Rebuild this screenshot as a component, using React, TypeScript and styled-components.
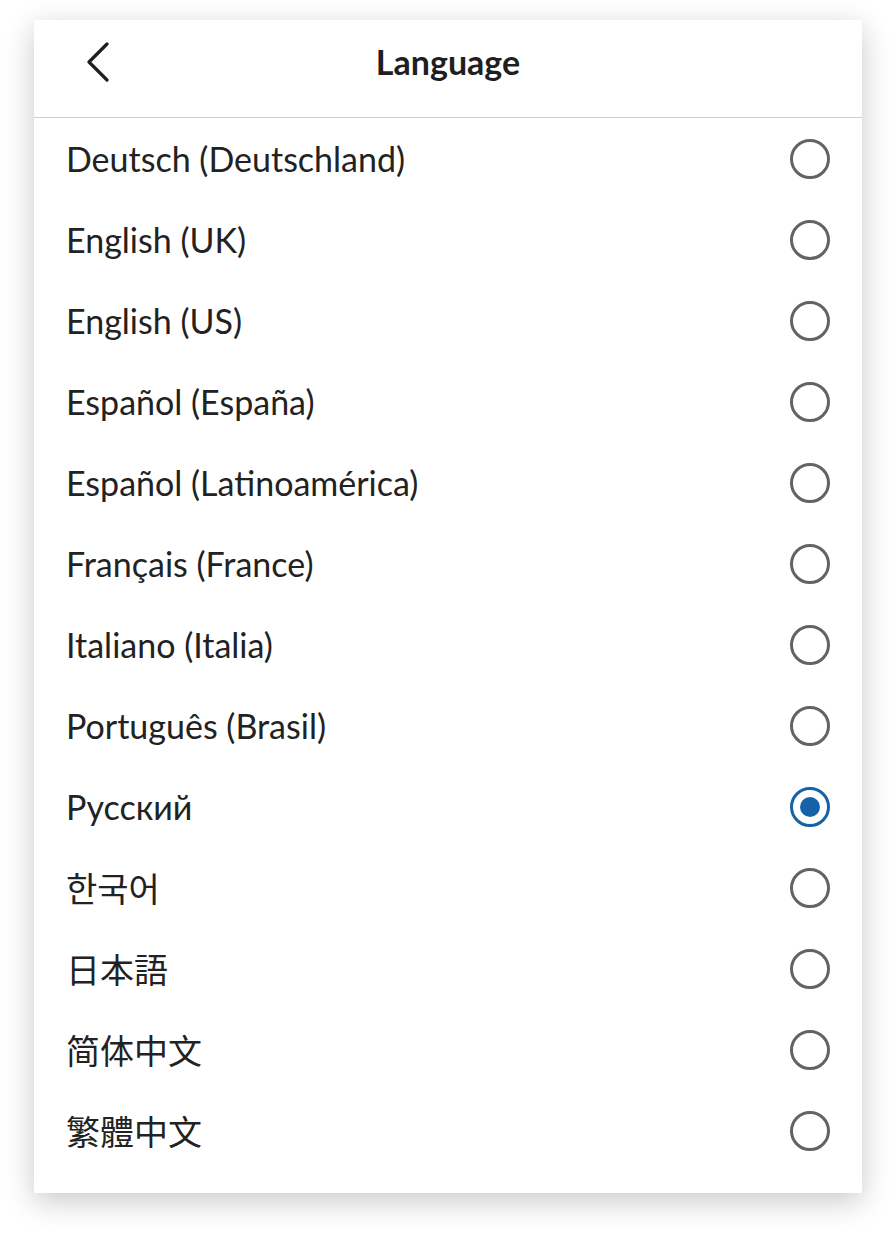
import React, { useState } from "react";
import styled, { createGlobalStyle } from "styled-components";

const Global = createGlobalStyle`
  html, body { margin: 0; padding: 0; background: #ffffff; }
  body { font-family: Lato, "Noto Sans CJK SC", sans-serif; }
`;

const Page = styled.div`
  padding: 20px 34px 48px 34px;
`;

const Card = styled.div`
  width: 828px;
  background: #ffffff;
  box-shadow: 0 8px 28px rgba(0, 0, 0, 0.22);
  padding-bottom: 22px;
`;

const Header = styled.div`
  height: 98px;
  box-sizing: border-box;
  padding-bottom: 14px;
  border-bottom: 1px solid #cfcfcf;
  display: grid;
  grid-template-columns: 97px 1fr 97px;
  align-items: center;
`;

const BackButton = styled.button`
  border: 0;
  background: transparent;
  padding: 0;
  margin-left: 52px;
  width: 30px;
  height: 44px;
  display: flex;
  align-items: center;
  justify-content: flex-start;
  cursor: pointer;
`;

const Title = styled.h1`
  margin: 0;
  text-align: center;
  font-family: Lato, sans-serif;
  font-weight: 700;
  font-size: 34px;
  color: #1f1f1f;
`;

const List = styled.div`
  display: flex;
  flex-direction: column;
`;

const Row = styled.label`
  height: 81px;
  display: flex;
  align-items: center;
  justify-content: space-between;
  padding: 0 32px 0 32px;
  cursor: pointer;
`;

const Name = styled.span<{ $lang?: string }>`
  font-family: ${(p) => (p.$lang ? cjkFont[p.$lang] : "Lato, sans-serif")};
  font-weight: 400;
  font-size: 34px;
  color: #222222;
`;

const Radio = styled.span<{ $checked: boolean }>`
  width: 40px;
  height: 40px;
  box-sizing: border-box;
  border-radius: 50%;
  border: 3px solid ${(p) => (p.$checked ? "#1562a8" : "#636363")};
  display: flex;
  align-items: center;
  justify-content: center;
  &::after {
    content: "";
    width: 20px;
    height: 20px;
    border-radius: 50%;
    background: #1562a8;
    display: ${(p) => (p.$checked ? "block" : "none")};
  }
`;

const cjkFont: Record<string, string> = {
  ko: '"Noto Sans CJK KR", sans-serif',
  ja: '"Noto Sans CJK JP", sans-serif',
  "zh-CN": '"Noto Sans CJK SC", sans-serif',
  "zh-TW": '"Noto Sans CJK TC", sans-serif',
};

const languages: { label: string; lang?: string }[] = [
  { label: "Deutsch (Deutschland)" },
  { label: "English (UK)" },
  { label: "English (US)" },
  { label: "Español (España)" },
  { label: "Español (Latinoamérica)" },
  { label: "Français (France)" },
  { label: "Italiano (Italia)" },
  { label: "Português (Brasil)" },
  { label: "Русский" },
  { label: "한국어", lang: "ko" },
  { label: "日本語", lang: "ja" },
  { label: "简体中文", lang: "zh-CN" },
  { label: "繁體中文", lang: "zh-TW" },
];

export default function App() {
  const [selected, setSelected] = useState("Русский");
  return (
    <>
      <Global />
      <Page>
        <Card>
          <Header>
            <BackButton aria-label="Back">
              <svg width="24" height="40" viewBox="0 0 24 40" fill="none">
                <path
                  d="M21 2 L3 20 L21 38"
                  stroke="#1f1f1f"
                  strokeWidth="3.2"
                  strokeLinecap="round"
                  strokeLinejoin="round"
                />
              </svg>
            </BackButton>
            <Title>Language</Title>
            <span />
          </Header>
          <List>
            {languages.map((l) => (
              <Row key={l.label} onClick={() => setSelected(l.label)}>
                <Name $lang={l.lang}>{l.label}</Name>
                <Radio $checked={selected === l.label} />
              </Row>
            ))}
          </List>
        </Card>
      </Page>
    </>
  );
}
